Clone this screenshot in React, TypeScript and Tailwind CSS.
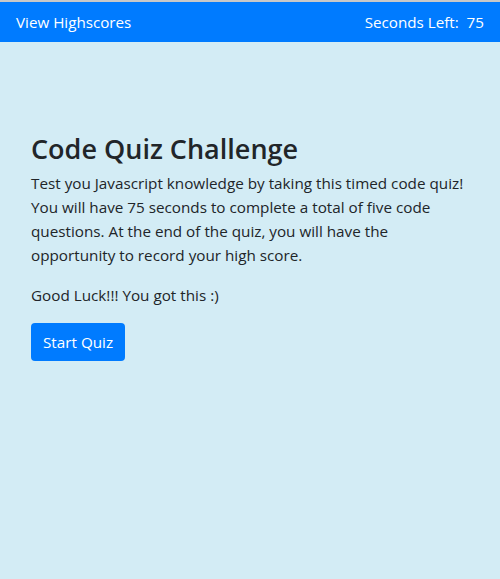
export default function App() {
  return (
    <div className="min-h-[579px] flex flex-col bg-[#d3ecf5] font-['Open_Sans',sans-serif] text-[#212529]">
      <div className="h-[2px] bg-[#c8c8c8]" />
      <nav className="h-[40px] bg-[#007bff] flex items-center justify-between px-4 text-white text-[15.2px]">
        <span>View Highscores</span>
        <span>Seconds Left:&nbsp; 75</span>
      </nav>
      <main className="px-[31px] pt-[91px]">
        <h3 className="text-[27px] font-semibold leading-[1.2] mb-[6px]">Code Quiz Challenge</h3>
        <p className="text-[15.25px] leading-6 mb-4">
          Test you Javascript knowledge by taking this timed code quiz! You will have 75 seconds to complete a total of
          five code questions. At the end of the quiz, you will have the opportunity to record your high score.
        </p>
        <p className="text-[15.25px] leading-6 mb-4">Good Luck!!! You got this :)</p>
        <button className="bg-[#007bff] text-white text-[15.25px] leading-6 px-3 py-[7px] rounded">Start Quiz</button>
      </main>
    </div>
  );
}
